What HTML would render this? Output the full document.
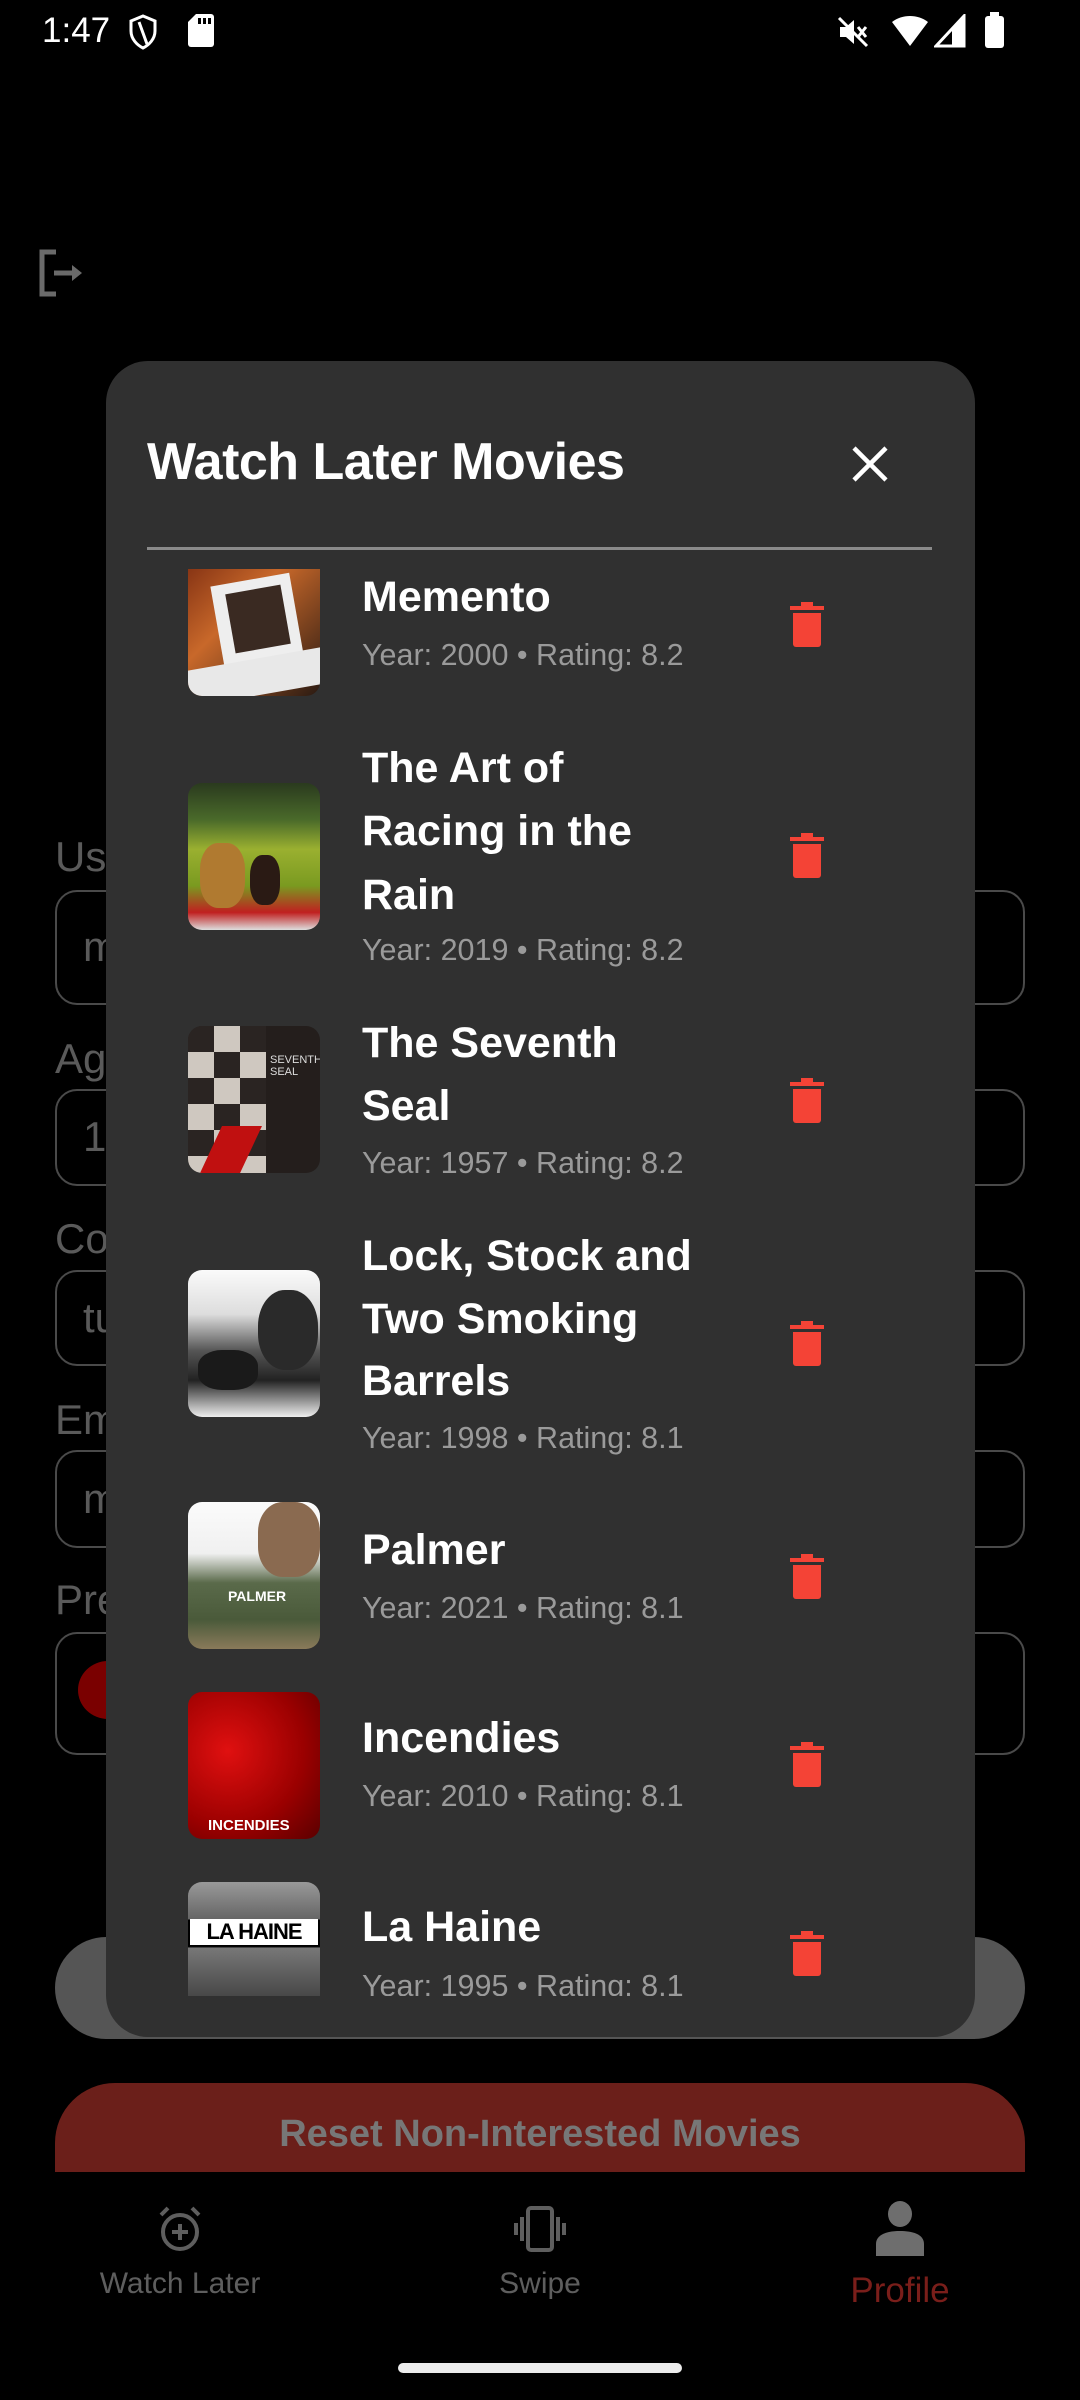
<!DOCTYPE html>
<html><head><meta charset="utf-8">
<style>
*{margin:0;padding:0;box-sizing:border-box}
html,body{width:1080px;height:2400px;overflow:hidden}
body{background:#000;position:relative;font-family:"Liberation Sans",sans-serif}
.a{position:absolute}
.lbl{position:absolute;left:55px;color:#5a5a5a;font-size:42px;line-height:50px}
.fld{position:absolute;left:55px;width:970px;border:2px solid #4a4a4a;border-radius:22px}
.ft{position:absolute;left:83px;color:#5a5a5a;font-size:42px;line-height:50px}
.dlg{position:absolute;left:106px;top:361px;width:869px;height:1676px;background:#303030;border-radius:42px;overflow:hidden}
.t{position:absolute;left:256px;color:#fff;font-weight:bold;font-size:43px;line-height:60px;white-space:nowrap}
.s{position:absolute;left:256px;color:#9a9a9a;font-size:30.5px;line-height:40px;white-space:nowrap}
.p{position:absolute;left:82px;width:132px;height:147px;border-radius:14px;overflow:hidden}
.tr{position:absolute;left:682px;width:38px;height:46px}
.nl{position:absolute;color:#5e5e5e;font-size:30px;text-align:center;width:300px;line-height:36px}
</style></head><body>
<div class="a" style="left:42px;top:11px;color:#fff;font-size:35px;line-height:40px">1:47</div>
<svg class="a" style="left:128px;top:14px" width="30" height="36" viewBox="0 0 30 36"><path d="M15 2 L27 7 V17 C27 25 21 31 15 34 C9 31 3 25 3 17 V7 Z" fill="none" stroke="#fff" stroke-width="3"/><path d="M11 8 L19 30" stroke="#fff" stroke-width="3"/></svg>
<svg class="a" style="left:188px;top:14px" width="26" height="33" viewBox="0 0 26 33"><path d="M8 0 H23 a3 3 0 0 1 3 3 V30 a3 3 0 0 1 -3 3 H3 a3 3 0 0 1 -3 -3 V8 Z" fill="#fff"/><rect x="10" y="4" width="3" height="6" fill="#000"/><rect x="15" y="4" width="3" height="6" fill="#000"/><rect x="20" y="4" width="3" height="6" fill="#000"/></svg>
<svg class="a" style="left:836px;top:15px" width="34" height="34" viewBox="0 0 34 34"><path d="M4 12 H10 L18 5 V29 L10 22 H4 Z" fill="#fff"/><path d="M22 12 L30 22 M30 12 L22 22" stroke="#fff" stroke-width="3"/><path d="M3 3 L31 31" stroke="#fff" stroke-width="3"/></svg>
<svg class="a" style="left:890px;top:14px" width="40" height="34" viewBox="0 0 40 34"><path d="M2 8 C12 0 28 0 38 8 L20 32 Z" fill="#fff"/></svg>
<svg class="a" style="left:934px;top:14px" width="32" height="34" viewBox="0 0 32 34"><path d="M30 2 V32 H2 Z" fill="none" stroke="#fff" stroke-width="3"/><path d="M30 2 V32 H18 V16 Z" fill="#fff"/></svg>
<div class="a" style="left:985px;top:16px;width:19px;height:32px;background:#fff;border-radius:3px"></div>
<div class="a" style="left:990px;top:12px;width:9px;height:5px;background:#fff"></div>
<svg class="a" style="left:38px;top:249px" width="48" height="48" viewBox="0 0 48 48"><path d="M18 3 H4 V45 H18" fill="none" stroke="#6a6a6a" stroke-width="5"/><path d="M16 24 H38" stroke="#6a6a6a" stroke-width="5"/><path d="M34 16 L44 24 L34 32 Z" fill="#6a6a6a"/></svg>
<div class="lbl" style="top:832px">Us</div>
<div class="fld" style="top:890px;height:115px"></div><div class="ft" style="top:922px">m</div>
<div class="lbl" style="top:1034px">Ag</div>
<div class="fld" style="top:1089px;height:97px"></div><div class="ft" style="top:1112px">19</div>
<div class="lbl" style="top:1214px">Co</div>
<div class="fld" style="top:1270px;height:96px"></div><div class="ft" style="top:1293px">tu</div>
<div class="lbl" style="top:1395px">Em</div>
<div class="fld" style="top:1450px;height:98px"></div><div class="ft" style="top:1474px">m</div>
<div class="lbl" style="top:1575px">Pre</div>
<div class="fld" style="top:1632px;height:123px"></div>
<div class="a" style="left:78px;top:1661px;width:60px;height:58px;border-radius:50%;background:#7a0000"></div>
<div class="a" style="left:55px;top:1937px;width:970px;height:102px;border-radius:51px;background:#555"></div>
<div class="a" style="left:55px;top:2083px;width:970px;height:150px;border-radius:60px;background:#6b1f1a"></div>
<div class="a" style="left:55px;top:2110px;width:970px;text-align:center;color:#777;font-weight:bold;font-size:38px;line-height:48px">Reset Non-Interested Movies</div>
<div class="a" style="left:0;top:2172px;width:1080px;height:228px;background:#000"></div>
<svg class="a" style="left:158px;top:2205px" width="44" height="48" viewBox="0 0 44 48"><circle cx="22" cy="27" r="17" fill="none" stroke="#5e5e5e" stroke-width="4"/><path d="M22 19 V35 M14 27 H30" stroke="#5e5e5e" stroke-width="4"/><path d="M3 10 L10 3 M41 10 L34 3" stroke="#5e5e5e" stroke-width="4"/></svg>
<svg class="a" style="left:513px;top:2205px" width="54" height="48" viewBox="0 0 54 48"><rect x="15" y="3" width="24" height="42" rx="3" fill="none" stroke="#5e5e5e" stroke-width="4"/><path d="M9 12 V36 M45 12 V36 M3 18 V30 M51 18 V30" stroke="#5e5e5e" stroke-width="4"/></svg>
<svg class="a" style="left:874px;top:2200px" width="52" height="58" viewBox="0 0 52 58"><ellipse cx="26" cy="14" rx="12" ry="13" fill="#6e6e6e"/><path d="M2 56 V44 C2 34 14 31 26 31 C38 31 50 34 50 44 V56 Z" fill="#6e6e6e"/></svg>
<div class="nl" style="left:30px;top:2266px">Watch Later</div>
<div class="nl" style="left:390px;top:2266px">Swipe</div>
<div class="nl" style="left:750px;top:2271px;color:#7a1e1a;font-size:35px;line-height:40px">Profile</div>
<div class="a" style="left:398px;top:2363px;width:284px;height:10px;border-radius:5px;background:#ececec"></div>
<div class="dlg">
<div class="a" style="left:41px;top:70px;color:#fff;font-weight:bold;font-size:52px;line-height:62px;letter-spacing:-0.5px">Watch Later Movies</div>
<svg class="a" style="left:745px;top:84px" width="38" height="38" viewBox="0 0 38 38"><path d="M3 3 L35 35 M35 3 L3 35" stroke="#fff" stroke-width="4.5"/></svg>
<div class="a" style="left:41px;top:186px;width:785px;height:3px;background:#8a8a8a"></div>
</div>
<div class="a" style="left:106px;top:569px;width:869px;height:1427px;overflow:hidden">
<div class="a" style="left:0;top:-569px;width:869px;height:2000px">
<svg width="0" height="0" style="position:absolute"><defs><g id="tr"><path d="M2 9 H36 V5 H25 V1 H13 V5 H2 Z" fill="#f44336"/><path d="M5 12 H33 V43 a3 3 0 0 1 -3 3 H8 a3 3 0 0 1 -3 -3 Z" fill="#f44336"/></g></defs></svg>
<div class="p" style="top:549px;background:linear-gradient(135deg,#7a2a10,#c8682a 40%,#2a1a12)"><div class="a" style="left:30px;top:30px;width:80px;height:95px;background:#eee;transform:rotate(-10deg)"></div><div class="a" style="left:42px;top:40px;width:56px;height:60px;background:#3a2a22;transform:rotate(-10deg)"></div><div class="a" style="left:0;top:110px;width:132px;height:37px;background:#e8e8e8;transform:skewY(-10deg)"></div></div>
<div class="t" style="top:567px">Memento</div>
<div class="s" style="top:635px">Year: 2000 • Rating: 8.2</div>
<svg class="tr" style="top:601px" viewBox="0 0 38 46"><use href="#tr"/></svg>
<div class="p" style="top:783px;background:linear-gradient(180deg,#2a3a1e 0,#4a6a2a 25%,#9ab030 45%,#7a9a20 70%,#c02020 88%,#ddd 100%)"><div class="a" style="left:12px;top:60px;width:45px;height:65px;border-radius:40%;background:#b07a30"></div><div class="a" style="left:62px;top:72px;width:30px;height:50px;border-radius:40%;background:#2a1a14"></div></div>
<div class="t" style="top:738px">The Art of</div>
<div class="t" style="top:801px">Racing in the</div>
<div class="t" style="top:865px">Rain</div>
<div class="s" style="top:930px">Year: 2019 • Rating: 8.2</div>
<svg class="tr" style="top:832px" viewBox="0 0 38 46"><use href="#tr"/></svg>
<div class="p" style="top:1026px;background:#241e1c"><div class="a" style="left:0;top:0;width:78px;height:147px;background:repeating-conic-gradient(#cfc8c0 0 25%,#2a2422 0 50%) 0 0/52px 52px"></div><div class="a" style="left:20px;top:100px;width:40px;height:60px;background:#c01010;transform:skewX(-25deg)"></div><div class="a" style="left:82px;top:28px;color:#ddd;font-size:11px;line-height:12px">SEVENTH<br>SEAL</div></div>
<div class="t" style="top:1013px">The Seventh</div>
<div class="t" style="top:1076px">Seal</div>
<div class="s" style="top:1143px">Year: 1957 • Rating: 8.2</div>
<svg class="tr" style="top:1077px" viewBox="0 0 38 46"><use href="#tr"/></svg>
<div class="p" style="top:1270px;background:linear-gradient(180deg,#fafafa 0,#ddd 30%,#555 55%,#222 75%,#eee 100%)"><div class="a" style="left:70px;top:20px;width:60px;height:80px;border-radius:45%;background:#2a2a2a"></div><div class="a" style="left:10px;top:80px;width:60px;height:40px;border-radius:40%;background:#1a1a1a"></div></div>
<div class="t" style="top:1226px">Lock, Stock and</div>
<div class="t" style="top:1289px">Two Smoking</div>
<div class="t" style="top:1351px">Barrels</div>
<div class="s" style="top:1418px">Year: 1998 • Rating: 8.1</div>
<svg class="tr" style="top:1320px" viewBox="0 0 38 46"><use href="#tr"/></svg>
<div class="p" style="top:1502px;background:linear-gradient(180deg,#fbfbfb 0,#f0f0f0 35%,#5a6a4a 55%,#4a5a3a 80%,#8a7a5a 100%)"><div class="a" style="left:70px;top:0;width:62px;height:75px;border-radius:40%;background:#8a6a50"></div><div class="a" style="left:40px;top:86px;color:#fff;font-weight:bold;font-size:14px">PALMER</div></div>
<div class="t" style="top:1520px">Palmer</div>
<div class="s" style="top:1588px">Year: 2021 • Rating: 8.1</div>
<svg class="tr" style="top:1553px" viewBox="0 0 38 46"><use href="#tr"/></svg>
<div class="p" style="top:1692px;background:radial-gradient(circle at 30% 40%,#e01010,#9a0000 60%,#5a0000)"><div class="a" style="left:20px;top:125px;color:#fff;font-weight:bold;font-size:15px">INCENDIES</div></div>
<div class="t" style="top:1708px">Incendies</div>
<div class="s" style="top:1776px">Year: 2010 • Rating: 8.1</div>
<svg class="tr" style="top:1741px" viewBox="0 0 38 46"><use href="#tr"/></svg>
<div class="p" style="top:1882px;background:linear-gradient(180deg,#999 0,#666 25%,#000 26%,#000 44%,#777 45%,#444 80%,#000 82%)"><div class="a" style="left:2px;top:37px;width:128px;height:26px;background:#fff;color:#000;font-weight:bold;font-size:22px;line-height:26px;text-align:center;letter-spacing:-1px">LA HAINE</div></div>
<div class="t" style="top:1897px">La Haine</div>
<div class="s" style="top:1966px">Year: 1995 • Rating: 8.1</div>
<svg class="tr" style="top:1930px" viewBox="0 0 38 46"><use href="#tr"/></svg>
</div>
</div>
</body></html>
